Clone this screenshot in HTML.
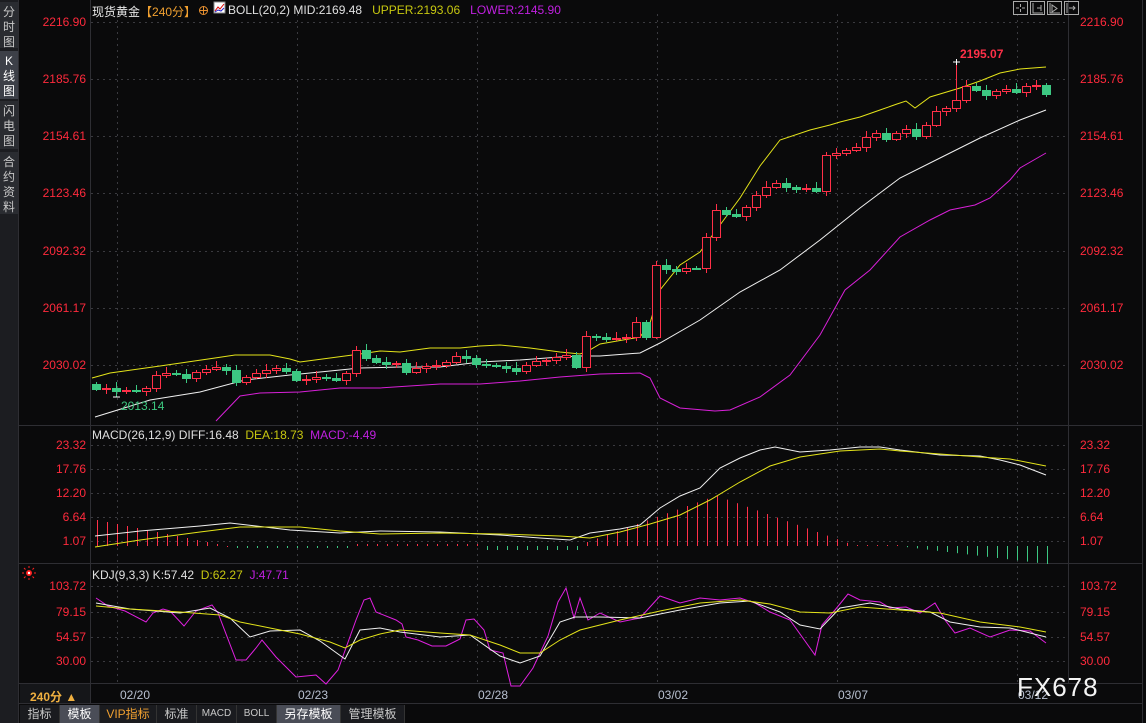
<!DOCTYPE html>
<html><head><meta charset="utf-8">
<style>
*{margin:0;padding:0;box-sizing:border-box}
body{width:1146px;height:723px;background:#0a0a0b;overflow:hidden;position:relative;font-family:"Liberation Sans","Noto Sans CJK SC",sans-serif;font-size:12px;color:#e0e0e0}
.abs{position:absolute;white-space:nowrap}
.side{position:absolute;left:0;top:0;width:18px;height:723px;background:#1c1d21}
.sb{position:absolute;left:0;width:18px;background:#2a2c31;color:#c8c8c8;font-size:12px;line-height:15px;text-align:center;padding-top:3px}
.pl{position:absolute;width:70px;text-align:right;color:#ff2a3c;font-size:12px;left:16px}
.pr{position:absolute;left:1080px;color:#ff2a3c;font-size:12px}
.tab{position:absolute;top:705px;height:18px;line-height:18px;text-align:center;color:#c8c8c8;font-size:12px;background:#1a1b1f;border-right:1px solid #333}
.dt{position:absolute;top:688px;color:#b8c0d0;font-size:12px}
</style></head><body>
<div class="side"></div>
<div class="sb" style="top:2px;height:46px">分<br>时<br>图</div>
<div class="sb" style="top:51px;height:48px;background:#3d4048;color:#fff">K<br>线<br>图</div>
<div class="sb" style="top:101px;height:48px">闪<br>电<br>图</div>
<div class="sb" style="top:152px;height:62px">合<br>约<br>资<br>料</div>

<svg class="abs" style="left:0;top:0" width="1146" height="723">
<g stroke="#2e2e33" stroke-width="1">
<line x1="18.5" y1="0" x2="18.5" y2="723"/>
<line x1="90.5" y1="0" x2="90.5" y2="703"/>
<line x1="1068.5" y1="0" x2="1068.5" y2="683"/>
<line x1="1142.5" y1="0" x2="1142.5" y2="723"/>
<line x1="18" y1="425.5" x2="1142" y2="425.5"/>
<line x1="18" y1="563.5" x2="1142" y2="563.5"/>
<line x1="18" y1="683.5" x2="1142" y2="683.5"/>
<line x1="18" y1="703.5" x2="1142" y2="703.5"/>
</g>
<g stroke="#3a3a3f" stroke-width="1" stroke-dasharray="2,4" id="grid"></g>
<g id="boll" fill="none" stroke-width="1"></g>
<g id="cdl"></g>
<g id="macd"></g>
<g id="kdj" fill="none" stroke-width="1"></g>
<g stroke="#aaa" fill="none">
<rect x="1013.5" y="1.5" width="14" height="13"/><rect x="1030.5" y="1.5" width="14" height="13"/><rect x="1047.5" y="1.5" width="14" height="13"/><rect x="1064.5" y="1.5" width="14" height="13"/>
<path d="M1020.5 4v3M1020.5 9v3M1016 8h3M1022 8h3"/>
<path d="M1033 3v10h10M1041 5v6M1037 8h4"/>
<path d="M1050 3v10h10M1052 5v7l5-3.5z"/>
<path d="M1067 3v10M1069 8h6M1073 6l2 2-2 2"/>
</g>
<rect x="214" y="2" width="11" height="11" fill="#fff" stroke="#888"/>
<path d="M215 11l3-4 2 2 4-5" stroke="#d00" fill="none"/>
<path d="M215 12l3-2 3 1 3-3" stroke="#22c" fill="none"/>
<circle cx="203.5" cy="10.5" r="4" fill="none" stroke="#e89030"/><path d="M199.5 10.5h8M203.5 6.5v8" stroke="#e89030"/>
<circle cx="29" cy="573" r="3" fill="#ff2020"/>
<circle cx="29" cy="573" r="1.2" fill="#fff"/>
<g stroke="#ff2020" stroke-width="1"><path d="M29 566v2M29 578v2M22 573h2M34 573h2M24 568l1.5 1.5M32.5 576.5l1.5 1.5M34 568l-1.5 1.5M24 578l1.5-1.5"/></g>
</svg>

<div class="abs" style="left:92px;top:3px;font-size:12px"><span style="color:#e8e8e8">现货黄金</span><span style="color:#f0a030">【240分】</span></div>
<div class="abs" style="left:228px;top:3px;font-size:12px"><span style="color:#e0e0e0">BOLL(20,2) MID:2169.48</span>&nbsp;&nbsp;&nbsp;<span style="color:#c8c810">UPPER:2193.06</span>&nbsp;&nbsp;&nbsp;<span style="color:#c020e0">LOWER:2145.90</span></div>

<div class="pl" style="top:15px">2216.90</div><div class="pl" style="top:72px">2185.76</div><div class="pl" style="top:129px">2154.61</div><div class="pl" style="top:186px">2123.46</div><div class="pl" style="top:244px">2092.32</div><div class="pl" style="top:301px">2061.17</div><div class="pl" style="top:358px">2030.02</div>
<div class="pr" style="top:15px">2216.90</div><div class="pr" style="top:72px">2185.76</div><div class="pr" style="top:129px">2154.61</div><div class="pr" style="top:186px">2123.46</div><div class="pr" style="top:244px">2092.32</div><div class="pr" style="top:301px">2061.17</div><div class="pr" style="top:358px">2030.02</div>

<div class="abs" style="left:960px;top:47px;color:#ff3048;font-weight:bold;font-size:12px">2195.07</div>
<div class="abs" style="left:121px;top:399px;color:#3dc880;font-size:12px">2013.14</div>

<div class="abs" style="left:92px;top:428px"><span style="color:#e0e0e0">MACD(26,12,9) DIFF:16.48</span>&nbsp;&nbsp;<span style="color:#c8c810">DEA:18.73</span>&nbsp;&nbsp;<span style="color:#c020e0">MACD:-4.49</span></div>
<div class="pl" style="top:438px">23.32</div><div class="pl" style="top:462px">17.76</div><div class="pl" style="top:486px">12.20</div><div class="pl" style="top:510px">6.64</div><div class="pl" style="top:534px">1.07</div>
<div class="pr" style="top:438px">23.32</div><div class="pr" style="top:462px">17.76</div><div class="pr" style="top:486px">12.20</div><div class="pr" style="top:510px">6.64</div><div class="pr" style="top:534px">1.07</div>

<div class="abs" style="left:92px;top:568px"><span style="color:#e0e0e0">KDJ(9,3,3) K:57.42</span>&nbsp;&nbsp;<span style="color:#c8c810">D:62.27</span>&nbsp;&nbsp;<span style="color:#c020e0">J:47.71</span></div>
<div class="pl" style="top:579px">103.72</div><div class="pl" style="top:605px">79.15</div><div class="pl" style="top:630px">54.57</div><div class="pl" style="top:654px">30.00</div>
<div class="pr" style="top:579px">103.72</div><div class="pr" style="top:605px">79.15</div><div class="pr" style="top:630px">54.57</div><div class="pr" style="top:654px">30.00</div>

<div class="abs" style="left:20px;top:684px;width:70px;height:19px;background:#151619"></div>
<div class="abs" style="left:30px;top:688px;color:#f0b040;font-weight:bold;font-size:12px">240分 ▲</div>
<div class="dt" style="left:120px">02/20</div><div class="dt" style="left:298px">02/23</div><div class="dt" style="left:478px">02/28</div><div class="dt" style="left:658px">03/02</div><div class="dt" style="left:838px">03/07</div><div class="dt" style="left:1018px">03/12</div>
<div class="abs" style="left:1017px;top:672px;color:#f4f4f4;font-size:26px;letter-spacing:1px">FX678</div>

<div class="tab" style="left:20px;width:40px">指标</div>
<div class="tab" style="left:60px;width:40px;background:#4a4d57;color:#fff">模板</div>
<div class="tab" style="left:100px;width:57px;color:#f0a030">VIP指标</div>
<div class="tab" style="left:157px;width:40px">标准</div>
<div class="tab" style="left:197px;width:40px;font-size:10px">MACD</div>
<div class="tab" style="left:237px;width:40px;font-size:10px">BOLL</div>
<div class="tab" style="left:277px;width:64px;background:#4a4d57;color:#fff">另存模板</div>
<div class="tab" style="left:341px;width:64px">管理模板</div>

<script>
(function(){
var NS="http://www.w3.org/2000/svg";
function el(p,t,a){var e=document.createElementNS(NS,t);for(var q in a)e.setAttribute(q,a[q]);p.appendChild(e);return e;}
var g=document.getElementById('grid');
[22,79,136,193,251,308,365,445,469,493,517,541,586,612,637,661].forEach(function(y){el(g,'line',{x1:91,y1:y+.5,x2:1068,y2:y+.5});});
[117,297,477,657,837,1017].forEach(function(x){el(g,'line',{x1:x+.5,y1:14,x2:x+.5,y2:683});});
function pl(par,pts,col){el(par,'polyline',{points:pts.map(function(p){return p.join(',')}).join(' '),stroke:col,fill:'none'});}
var b=document.getElementById('boll');
pl(b,[[92,378],[110,373],[160,366],[215,358],[235,355],[270,355],[290,359],[300,362],[360,354],[380,351],[400,352],[430,348],[460,348],[480,346],[500,345],[530,348],[560,352],[580,354],[588,351],[600,344],[640,337],[650,323],[660,290],[680,265],[700,252],[720,225],[740,198],[760,166],[780,140],[810,130],[830,125],[840,122],[860,117],[880,110],[897,104],[906,101],[915,108],[930,97],[960,88],[980,81],[1000,73],[1020,69],[1046,67]],'#e4e41a');
pl(b,[[95,417],[150,400],[200,392],[245,380],[290,375],[340,370],[360,368],[400,367],[440,367],[480,362],[520,360],[560,357],[580,356],[600,356],[640,353],[660,343],[700,320],[740,292],[780,270],[820,240],[860,208],[900,178],[940,158],[980,138],[1020,120],[1046,110]],'#f0f0f0');
pl(b,[[216,421],[240,396],[260,393],[300,392],[340,388],[380,388],[440,384],[480,384],[520,381],[560,377],[600,374],[640,373],[650,378],[660,398],[680,408],[715,411],[730,410],[760,397],[790,375],[820,335],[845,290],[870,270],[900,237],[930,220],[950,210],[975,205],[990,198],[1010,180],[1020,168],[1046,153]],'#d820d8');
var C=[389,388,391,390,391,388,375,373,374,378,372,369,367,370,382,377,373,370,368,371,380,379,377,378,380,373,350,358,362,364,363,372,368,366,365,362,356,358,364,365,366,368,371,365,361,360,357,355,367,336,337,339,338,337,322,337,265,269,271,268,268,237,210,214,216,207,195,187,183,187,189,188,191,155,153,150,147,137,133,139,133,129,136,125,111,108,100,86,90,95,91,89,92,86,85,94];
var cg=document.getElementById('cdl');
var prev=384;
for(var i=0;i<C.length;i++){
 var x=92+10*i,o=prev,c=C[i],tp=Math.min(o,c),bt=Math.max(o,c);
 var hi=tp-2-(i*7%5),lo=bt+2+(i*3%4);
 if(i==86)hi=62; if(i==2)lo=397;
 var up=c<o, col=up?'#ff3048':'#3cc882';
 el(cg,'line',{x1:x+4.5,y1:hi,x2:x+4.5,y2:lo,stroke:col});
 var h=Math.max(bt-tp,1);
 if(up) el(cg,'rect',{x:x+.5,y:tp+.5,width:8,height:h,fill:'#0a0a0b',stroke:col});
 else el(cg,'rect',{x:x,y:tp,width:9,height:h+1,fill:col});
 prev=c;
}
var m=document.getElementById('macd');
for(var j=0;j<96;j++){
 var v;
 if(j<14)v=26-2*j; else if(j<26)v=-2; else if(j<39)v=2; else if(j<49)v=-4;
 else if(j<62)v=4+(j-49)*3.6; else if(j<76)v=50-(j-62)*3.6; else if(j<81)v=1; else v=-(j-80)*1.2;
 var xx=97+10*j, z=546;
 var yy=v>=0?z-v:z, hh=Math.max(Math.abs(v),1);
 el(m,'rect',{x:xx,y:yy,width:1,height:hh,fill:v>=0?'#ff3048':'#3cc882'});
}
pl(m,[[95,536],[140,531],[200,526],[230,523],[290,530],[340,533],[380,531],[440,532],[500,535],[540,538],[570,540],[590,533],[620,529],[640,525],[660,508],[680,496],[700,488],[720,468],[740,458],[760,450],[775,447],[800,452],[830,450],[860,447],[880,447],[900,450],[940,455],[980,456],[1000,460],[1020,465],[1046,475]],'#f0f0f0');
pl(m,[[95,547],[140,540],[200,532],[240,527],[300,527],[340,531],[380,534],[440,533],[500,534],[560,536],[590,538],[620,532],[650,524],[680,515],[710,500],[740,482],[770,466],[800,457],[840,451],[880,449],[900,451],[940,454],[980,457],[1010,459],[1046,466]],'#e4e41a');
var kg=document.getElementById('kdj');
pl(kg,[[96,598],[108,606],[125,611],[146,622],[153,613],[163,609],[170,611],[184,626],[196,611],[212,605],[218,613],[236,660],[246,660],[256,648],[262,640],[276,657],[296,677],[316,675],[326,684],[338,670],[356,620],[364,600],[370,598],[376,612],[396,620],[402,624],[406,637],[418,640],[432,646],[446,646],[460,639],[466,620],[474,619],[484,630],[490,650],[503,653],[511,686],[520,686],[533,668],[548,636],[558,602],[566,588],[574,618],[580,598],[588,620],[600,613],[620,622],[640,618],[660,596],[680,603],[700,598],[720,600],[740,598],[755,603],[770,612],[790,620],[805,641],[815,655],[822,625],[835,610],[848,594],[860,600],[880,602],[890,608],[906,607],[920,613],[935,603],[945,620],[955,633],[970,628],[990,637],[1010,630],[1030,631],[1046,643]],'#e020e0');
pl(kg,[[96,603],[130,609],[180,613],[210,608],[230,618],[250,637],[270,631],[300,630],[320,641],[345,659],[360,630],[380,628],[400,632],[440,637],[470,635],[500,656],[520,663],[540,656],[560,622],[575,617],[600,617],[640,618],[680,610],[720,603],[750,601],[780,612],[800,625],[820,629],[840,608],[870,603],[900,609],[930,612],[950,622],[980,627],[1010,628],[1046,637]],'#f0f0f0');
pl(kg,[[96,606],[130,609],[180,612],[220,615],[240,622],[270,628],[300,634],[330,642],[345,648],[360,640],[380,634],[400,630],[440,633],[470,635],[500,645],[520,653],[540,653],[560,640],[580,630],[620,620],[660,611],[700,603],[740,600],[770,604],[800,612],[830,613],[860,607],[900,610],[940,613],[980,622],[1020,627],[1046,632]],'#e4e41a');
el(cg,'path',{d:'M953 62h7M956.5 59v6M113 397h7',stroke:'#fff'});
})();
</script>
</body></html>
